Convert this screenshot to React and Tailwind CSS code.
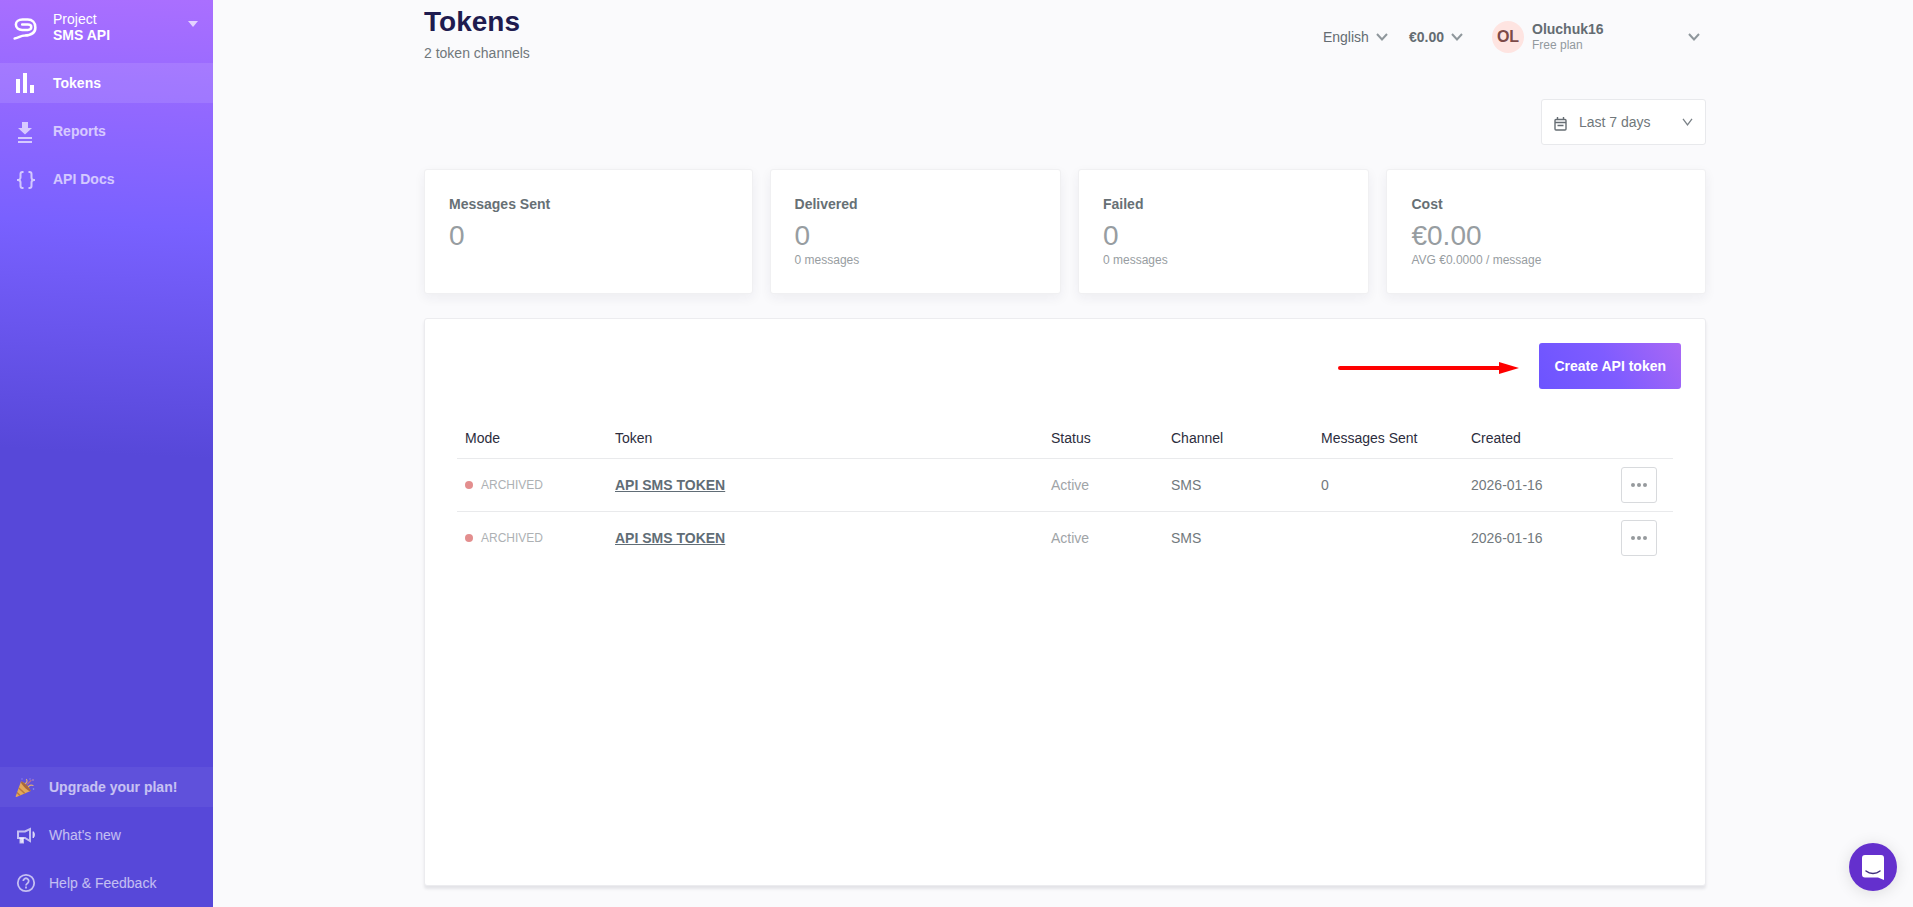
const stats = [
  { label: 'Messages Sent', value: '0', note: '' },
  { label: 'Delivered', value: '0', note: '0 messages' },
  { label: 'Failed', value: '0', note: '0 messages' },
  { label: 'Cost', value: '€0.00', note: 'AVG €0.0000 / message' },
];

const tokens = [
  { id: 1, mode: 'ARCHIVED', name: 'API SMS TOKEN', status: 'Active', channel: 'SMS', sent: '0', created: '2026-01-16' },
  { id: 2, mode: 'ARCHIVED', name: 'API SMS TOKEN', status: 'Active', channel: 'SMS', sent: '', created: '2026-01-16' },
];

const Logo = () => (
  <svg viewBox="23 35 76 70" className="w-6 h-[22px]" fill="none" stroke="currentColor" strokeWidth="8" strokeLinecap="round" strokeLinejoin="round">
    <path d="M28 100C42 99 46 91 60 91C80 90 94 82 94 65C94 49 84 40 70 40H53C40 40 32 47 32 56C32 67 41 73 52 73H70C77 73 81 69 81 64C81 59 77 56 70 56H52" />
  </svg>
);

const BarsIcon = () => (
  <svg viewBox="0 0 24 24" className="size-6" fill="currentColor">
    <path d="M3 8h4v14H3zM10 2h4v20h-4zM17 14h4v8h-4z" />
  </svg>
);

const DownloadIcon = () => (
  <svg viewBox="0 0 24 24" className="size-6" fill="currentColor">
    <path d="M9 3h6v6h4l-7 6.500-7-6.500h4zM5 18h14v2H5zM5 22h14v2H5z" />
  </svg>
);

const BracesIcon = () => (
  <svg viewBox="0 0 24 24" className="size-6" fill="none" stroke="currentColor" strokeWidth="2">
    <path d="M10.500 5H9.500a2 2 0 0 0-2 2v3.500a2.500 2.500 0 0 1-2.500 2.500H4h1a2.500 2.500 0 0 1 2.500 2.500V19a2 2 0 0 0 2 2h1" />
    <path d="M15.500 5h1a2 2 0 0 1 2 2v3.500a2.500 2.500 0 0 0 2.500 2.500h1h-1a2.500 2.500 0 0 0-2.500 2.500V19a2 2 0 0 1-2 2h-1" />
  </svg>
);

const PartyIcon = () => (
  <svg viewBox="0 0 24 24" className="size-6">
    <path d="M8 6.500c4 1 8.500 5.500 9.500 9.500L3.500 22c-.6.200-1-.200-.800-.800z" fill="#e3a85a" />
    <path d="M8 6.500c-1.500 1 8 11.500 9.500 9.500c.500-2-6.500-9.500-9.500-9.500z" fill="#a8673a" />
    <path d="M5.800 13l6 5.500M4 17.500l3 3" stroke="#b9783e" strokeWidth="1.500" />
    <path d="M12.500 8.500c1.500-1 2-2.500 1-4M15.500 11.500c1.500-1.500 3-1.500 4.500-1" stroke="#d9ac7c" strokeWidth="1.200" fill="none" strokeLinecap="round" />
    <path d="M14.500 9l3.500-3.500" stroke="#b56d94" strokeWidth="1.200" strokeLinecap="round" />
    <circle cx="20" cy="5" r=".8" fill="#c98fb4" />
    <circle cx="17" cy="4" r=".8" fill="#8a7cf0" />
    <circle cx="20.500" cy="14" r=".8" fill="#8a9cf8" />
    <circle cx="9" cy="4" r=".8" fill="#8a7cf0" />
  </svg>
);

const MegaphoneIcon = () => (
  <svg viewBox="0 0 24 24" className="size-6" fill="none" stroke="currentColor" strokeWidth="2">
    <path d="M5 8.500h7L17 6v12l-5-3H5z" />
    <path d="M7.500 15.500v4h2.500v-4z" fill="currentColor" />
    <path d="M20 8.500c2 1.500 2 5 0 6.500z" fill="currentColor" strokeWidth="1" />
  </svg>
);

const HelpIcon = () => (
  <svg viewBox="0 0 24 24" className="size-6" fill="none" stroke="currentColor" strokeWidth="1.800">
    <circle cx="13" cy="12" r="8.200" />
    <path d="M10.300 10a2.700 2.700 0 1 1 4.400 2.100c-1 .800-1.700 1.200-1.700 2.400" />
    <path d="M13 15.500v2" />
  </svg>
);

const Chevron = () => (
  <svg viewBox="0 0 12 8" className="w-3 h-2 shrink-0 pointer-events-none" fill="none" stroke="#8f979c" strokeWidth="2">
    <path d="M1 1l5 5.500L11 1" />
  </svg>
);

const ThinChevron = () => (
  <svg viewBox="0 0 11 8" className="w-[11px] h-2 shrink-0 pointer-events-none" fill="none" stroke="#7a8187" strokeWidth="1.300">
    <path d="M1 .800l4.500 6L10 .800" />
  </svg>
);

const CalendarIcon = () => (
  <svg viewBox="0 0 13 14" className="w-[13px] h-3.5 mt-[3px] shrink-0" fill="none" stroke="#666d73" strokeWidth="1.400">
    <rect x="1" y="2.500" width="11" height="10.500" rx="1" />
    <path d="M1 5.500h11M3.500 0v3M9.500 0v3M3.500 8.500h6" />
  </svg>
);

const Sidebar = () => (
  <aside className="w-[213px] shrink-0 flex flex-col pb-1 text-white text-sm bg-[linear-gradient(183deg,#aa6fff_0%,#7961ff_25%,#5748d9_50%,#5748d9_100%)]">
    <button className="flex items-start gap-4 h-[63px] pl-[13px] pr-[15px] pt-[11px] text-left">
      <span className="pt-[7px]"><Logo /></span>
      <span className="flex-1 leading-4">
        <span className="block">Project</span>
        <span className="block font-bold">SMS API</span>
      </span>
      <svg viewBox="0 0 10 6" className="w-2.5 h-1.5 mt-2.5 opacity-70" fill="currentColor"><path d="M0 0h10L5 6z" /></svg>
    </button>

    <nav className="flex flex-col gap-2 font-bold">
      <a href="#tokens" className="flex items-center gap-4 h-10 pl-[13px] bg-white/10"><BarsIcon /> Tokens</a>
      <a href="#reports" className="flex items-center gap-4 h-10 pl-[13px] text-white/65"><DownloadIcon /> Reports</a>
      <a href="#docs" className="flex items-center gap-4 h-10 pl-[13px] text-white/65"><BracesIcon /> API Docs</a>
    </nav>

    <nav className="flex flex-col gap-2 mt-auto text-white/65">
      <a href="#upgrade" className="flex items-center gap-3 h-10 pl-[13px] font-bold bg-white/5"><PartyIcon /> Upgrade your plan!</a>
      <a href="#news" className="flex items-center gap-3 h-10 pl-[13px]"><MegaphoneIcon /> What's new</a>
      <a href="#help" className="flex items-center gap-3 h-10 pl-[13px]"><HelpIcon /> Help &amp; Feedback</a>
    </nav>
  </aside>
);

const Header = () => (
  <header className="flex items-center justify-between h-[74px]">
    <div className="self-start pt-1">
      <h1 className="text-[28px] leading-9 font-bold text-[#1e1b4f]">Tokens</h1>
      <p className="text-sm leading-[26px] text-[#70777b]">2 token channels</p>
    </div>
    <div className="flex items-center text-sm text-[#646c72]">
      <label className="flex items-center">
        <select aria-label="Language" className="appearance-none bg-transparent pr-[7px]">
          <option>English</option>
        </select>
        <Chevron />
      </label>
      <button className="flex items-center gap-[7px] ml-[21px] font-bold">€0.00 <Chevron /></button>
      <button className="flex items-center w-[214px] ml-[29px] pr-1.5 text-left">
        <span className="flex items-center justify-center size-8 rounded-full bg-[#fee4e1] text-base font-bold text-[#7c4a48]">OL</span>
        <span className="flex-1 ml-2">
          <span className="block leading-4 font-bold">Oluchuk16</span>
          <span className="block text-xs leading-4 text-[#92999e]">Free plan</span>
        </span>
        <Chevron />
      </button>
    </div>
  </header>
);

const StatCard = ({ label, value, note }) => (
  <div className="h-[125px] p-6 bg-white rounded-[3px] border border-[#f0f0f2] shadow-[0_4px_12px_rgba(40,40,70,0.06)]">
    <div className="text-sm leading-5 font-bold text-[#677075]">{label}</div>
    <div className="mt-1.5 text-[28px] leading-8 text-[#979da1]">{value}</div>
    <div className="text-xs leading-4 text-[#979da1]">{note}</div>
  </div>
);

const TokenTable = () => (
  <table className="w-full table-fixed text-sm text-[#72797d]">
    <thead>
      <tr className="h-[39px] text-left text-[#2c2d3d] border-b border-[#e9eaec]">
        <th className="w-[150px] px-2 font-normal">Mode</th>
        <th className="px-2 font-normal">Token</th>
        <th className="w-[120px] px-2 font-normal">Status</th>
        <th className="w-[150px] px-2 font-normal">Channel</th>
        <th className="w-[150px] px-2 font-normal">Messages Sent</th>
        <th className="w-[150px] px-2 font-normal">Created</th>
        <th className="w-[60px]"></th>
      </tr>
    </thead>
    <tbody>
      {tokens.map(t => (
        <tr key={t.id} className="h-[53px] border-b border-[#e9eaec] last:border-0">
          <td className="px-2">
            <span className="flex items-center gap-2 text-xs text-[#adb1b4]"><span className="size-2 rounded-full bg-[#e38e8e]"></span>{t.mode}</span>
          </td>
          <td className="px-2"><a href="#token" className="font-bold text-[#616d76] underline">{t.name}</a></td>
          <td className="px-2 text-[#a0a4a7]">{t.status}</td>
          <td className="px-2">{t.channel}</td>
          <td className="px-2">{t.sent}</td>
          <td className="px-2">{t.created}</td>
          <td className="px-2">
            <button aria-label="Token actions" className="flex items-center justify-center size-9 bg-white border border-[#d8dadd] rounded-[3px]">
              <svg viewBox="0 0 16 4" className="w-4 h-1" fill="#969a9d"><circle cx="2" cy="2" r="2" /><circle cx="8" cy="2" r="2" /><circle cx="14" cy="2" r="2" /></svg>
            </button>
          </td>
        </tr>
      ))}
    </tbody>
  </table>
);

export default function App() {
  return (
    <div className="flex min-h-screen bg-[#fafafc] font-['Liberation_Sans',Arial,sans-serif]">
      <Sidebar />

      <main className="flex-1 flex flex-col pl-1 pb-[21px]">
        <div className="flex-1 flex flex-col w-full max-w-[1282px] mx-auto">
          <Header />

          <div className="flex justify-end mt-[25px]">
            <label className="flex items-center w-[165px] h-[46px] px-3 bg-white border border-[#e8e9ec] rounded-[3px]">
              <CalendarIcon />
              <select aria-label="Period" className="flex-1 appearance-none ml-3 text-sm text-[#70777b]">
                <option>Last 7 days</option>
              </select>
              <ThinChevron />
            </label>
          </div>

          {/* Summary cards */}
          <div className="grid grid-cols-[328fr_291fr_291fr_319fr] gap-[17px] mt-6">
            {stats.map(s => <StatCard key={s.label} {...s} />)}
          </div>

          {/* Token list */}
          <section className="flex-1 flex flex-col mt-6 pt-6 bg-white rounded-[3px] border border-[#ececef] shadow-[0_3px_3px_rgba(40,40,60,0.1)]">
            <div className="flex items-center justify-end gap-5 pr-6">
              <svg viewBox="0 0 182 20" className="w-[182px] h-5">
                <path d="M3 12h162" stroke="#fe0000" strokeWidth="4" strokeLinecap="round" />
                <path d="M162 6l20 6-20 6z" fill="#fe0000" />
              </svg>
              <button className="h-[46px] px-[15px] rounded-[3px] text-sm font-bold text-white bg-[linear-gradient(60deg,#6c54ff_0%,#7f5cff_50%,#a968f5_100%)]">Create API token</button>
            </div>
            <div className="px-8 mt-[30px]">
              <TokenTable />
            </div>
          </section>
        </div>
      </main>

      {/* Chat launcher */}
      <button aria-label="Open chat" className="fixed right-4 bottom-4 flex items-center justify-center size-12 rounded-full bg-[#6430cd] shadow-[0_2px_16px_rgba(0,0,0,0.12)]">
        <svg viewBox="0 0 24 26" className="w-6 h-[26px]">
          <path d="M4 1h16a3 3 0 0 1 3 3v22l-6-2.500H4a3 3 0 0 1-3-3V4a3 3 0 0 1 3-3z" fill="#fff" />
          <path d="M5 17c4 3.200 10 3.200 14 0" fill="none" stroke="#3f2f7d" strokeWidth="1.500" strokeLinecap="round" />
        </svg>
      </button>
    </div>
  );
}
